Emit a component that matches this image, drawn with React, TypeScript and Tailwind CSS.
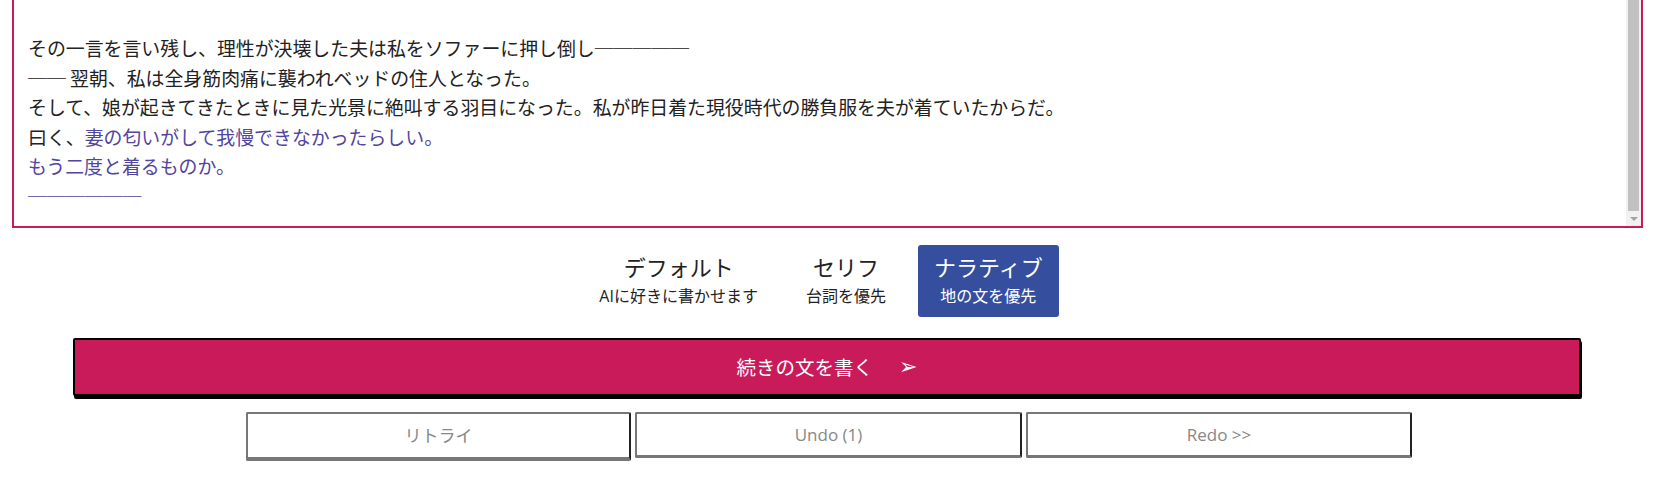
const jp = "font-['Noto_Sans_CJK_JP',sans-serif]";
const latin = "font-['Open_Sans','Noto_Sans_CJK_JP',sans-serif]";

const modes = [
  { title: "デフォルト", sub: "AIに好きに書かせます", active: false },
  { title: "セリフ", sub: "台詞を優先", active: false },
  { title: "ナラティブ", sub: "地の文を優先", active: true },
];

const Story = () => (
  <div className="ml-[12px] mr-[17px] h-[228px] border-2 border-t-0 border-[#c91b5a] flex">
    <div className="flex-1 pl-[14px] pt-[33px] text-[18.9px] leading-[29.6px] text-[#222] whitespace-pre">
      <div>その一言を言い残し、理性が決壊した夫は私をソファーに押し倒し─────</div>
      <div>── 翌朝、私は全身筋肉痛に襲われベッドの住人となった。</div>
      <div>そして、娘が起きてきたときに見た光景に絶叫する羽目になった。私が昨日着た現役時代の勝負服を夫が着ていたからだ。</div>
      <div>
        曰く、<span className="text-[#52459e]">妻の匂いがして我慢できなかったらしい。</span>
      </div>
      <div className="text-[#52459e]">もう二度と着るものか。</div>
      <div className="text-[#52459e]">──────</div>
    </div>
    <div className="w-[15px] bg-[#f1f1f1] flex flex-col">
      <div className="flex-1 mx-[2px] bg-[#c1c1c1]" />
      <div className="h-[15px] flex items-center justify-center">
        <div className="w-0 h-0 border-x-[4px] border-x-transparent border-t-[4px] border-t-[#a3a3a3]" />
      </div>
    </div>
  </div>
);

const ModeSwitch = () => (
  <div className="mt-[17px] flex justify-center gap-4 pr-[18px]">
    {modes.map((m) => (
      <button
        key={m.title}
        className={
          m.active
            ? "px-4 pt-[6px] pb-[10px] rounded-[3px] bg-[#354f9e] text-white flex flex-col items-center"
            : "px-4 pt-[6px] pb-[10px] rounded-[3px] text-[#222] flex flex-col items-center"
        }
      >
        <span className="text-[22px] leading-[30px]">{m.title}</span>
        <span className={`mt-1 text-[16px] leading-[22px] ${latin}`}>{m.sub}</span>
      </button>
    ))}
  </div>
);

const App = () => {
  return (
    <div className={`w-[1660px] h-[486px] bg-white overflow-hidden ${jp}`}>
      <Story />
      <ModeSwitch />
      <div className="mt-[21px] ml-[73px] mr-[79px]">
        <button className="w-full h-[58px] rounded-[2px] border-2 border-black bg-[#c91b5a] shadow-[1px_3px_0_#000] text-white flex items-center justify-center">
          <span className="text-[19.5px]">続きの文を書く</span>
          <span className="ml-[26px] text-[22px] leading-none font-['DejaVu_Sans',sans-serif]">➢</span>
        </button>
      </div>
      <div className={`mt-[16px] flex justify-center items-start gap-1 pr-[2px] ${latin}`}>
        <button className="w-[385px] h-[49px] rounded-[2px] border-2 border-[#777] border-r-[#222] border-b-[4px] text-[17px] text-[#888]">
          リトライ
        </button>
        <button className="w-[387px] h-[46px] rounded-[2px] border-2 border-[#777] border-r-[#222] border-b-[3px] text-[17px] text-[#888]">
          Undo (1)
        </button>
        <button className="w-[386px] h-[46px] rounded-[2px] border-2 border-[#777] border-r-[#222] border-b-[3px] text-[17px] text-[#888]">
          Redo &gt;&gt;
        </button>
      </div>
    </div>
  );
};

export default App;
